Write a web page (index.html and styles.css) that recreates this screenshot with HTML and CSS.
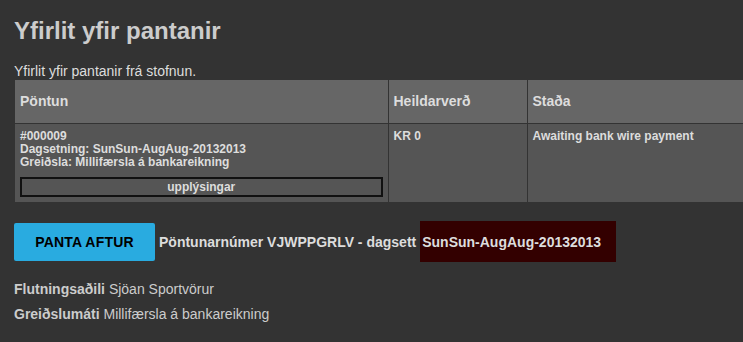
FILE: index.html
```html
<!DOCTYPE html>
<html lang="is">
<head>
  <meta charset="UTF-8">
  <title>Yfirlit yfir pantanir</title>
  <link rel="stylesheet" href="styles.css">
</head>
<body>

  <h1>Yfirlit yfir pantanir</h1>

  <p class="intro">Yfirlit yfir pantanir frá stofnun.</p>

  <table class="orders">
    <thead>
      <tr>
        <th class="col-order">Pöntun</th>
        <th class="col-total">Heildarverð</th>
        <th class="col-state">Staða</th>
      </tr>
    </thead>
    <tbody>
      <tr>
        <td>
          <div>#000009</div>
          <div>Dagsetning: SunSun-AugAug-20132013</div>
          <div>Greiðsla: Millifærsla á bankareikning</div>
          <a class="details" href="#">upplýsingar</a>
        </td>
        <td>KR 0</td>
        <td>Awaiting bank wire payment</td>
      </tr>
    </tbody>
  </table>

  <div class="reorder">
    <button class="btn-reorder">PANTA AFTUR</button>
    <span class="order-ref">Pöntunarnúmer VJWPPGRLV - dagsett</span>
    <span class="order-date">SunSun-AugAug-20132013</span>
  </div>

  <p class="meta"><strong>Flutningsaðili</strong> Sjöan Sportvörur</p>
  <p class="meta"><strong>Greiðslumáti</strong> Millifærsla á bankareikning</p>

</body>
</html>
```

FILE: styles.css
```css
* {
  box-sizing: border-box;
}

body {
  margin: 0;
  padding: 0 0 0 14px;
  background: #333;
  color: #ccc;
  font-family: 'Liberation Sans', Arial, sans-serif;
  overflow: hidden;
}

h1 {
  margin: 0;
  padding-top: 17px;
  font-size: 24px;
  line-height: 28px;
  color: #ccc;
}

.intro {
  margin: 18px 0 0;
  font-size: 14px;
  line-height: 16px;
  color: #ddd;
}

.orders {
  margin: 1px 0 0 1px;
  width: 728px;
  border-collapse: collapse;
  font-size: 12px;
  color: #ddd;
}

.orders th {
  background: #666;
  height: 43px;
  text-align: left;
  padding: 0 5px;
  font-size: 14px;
  border-left: 1px solid #333;
  border-bottom: 1px solid #333;
}

.orders th:first-child,
.orders td:first-child {
  border-left: none;
}

.col-order { width: 373px; }
.col-total { width: 139px; }

.orders td {
  background: #555;
  vertical-align: top;
  font-weight: bold;
  padding: 6px 5px 5px;
  line-height: 13px;
  height: 77px;
  border-left: 1px solid #333;
}

.details {
  display: block;
  margin-top: 8px;
  height: 20px;
  border: 2px solid #111;
  text-align: center;
  line-height: 16px;
  color: #ddd;
  text-decoration: none;
}

.reorder {
  display: flex;
  align-items: center;
  margin-top: 19px;
  height: 42px;
}

.btn-reorder {
  width: 141px;
  height: 38px;
  border: none;
  border-radius: 2px;
  background: #29abe0;
  color: #000;
  font-family: inherit;
  font-size: 14px;
  font-weight: bold;
  letter-spacing: 0.2px;
  cursor: pointer;
}

.order-ref {
  margin-left: 4px;
  font-size: 14px;
  font-weight: bold;
  color: #ddd;
}

.order-date {
  display: flex;
  align-items: center;
  margin-left: 4px;
  width: 196px;
  height: 41px;
  padding-left: 2px;
  background: #300;
  font-size: 14px;
  font-weight: bold;
  color: #ddd;
}

.meta {
  margin: 0;
  font-size: 14px;
  line-height: 25px;
  color: #ccc;
}

.reorder + .meta {
  margin-top: 14px;
}
```
